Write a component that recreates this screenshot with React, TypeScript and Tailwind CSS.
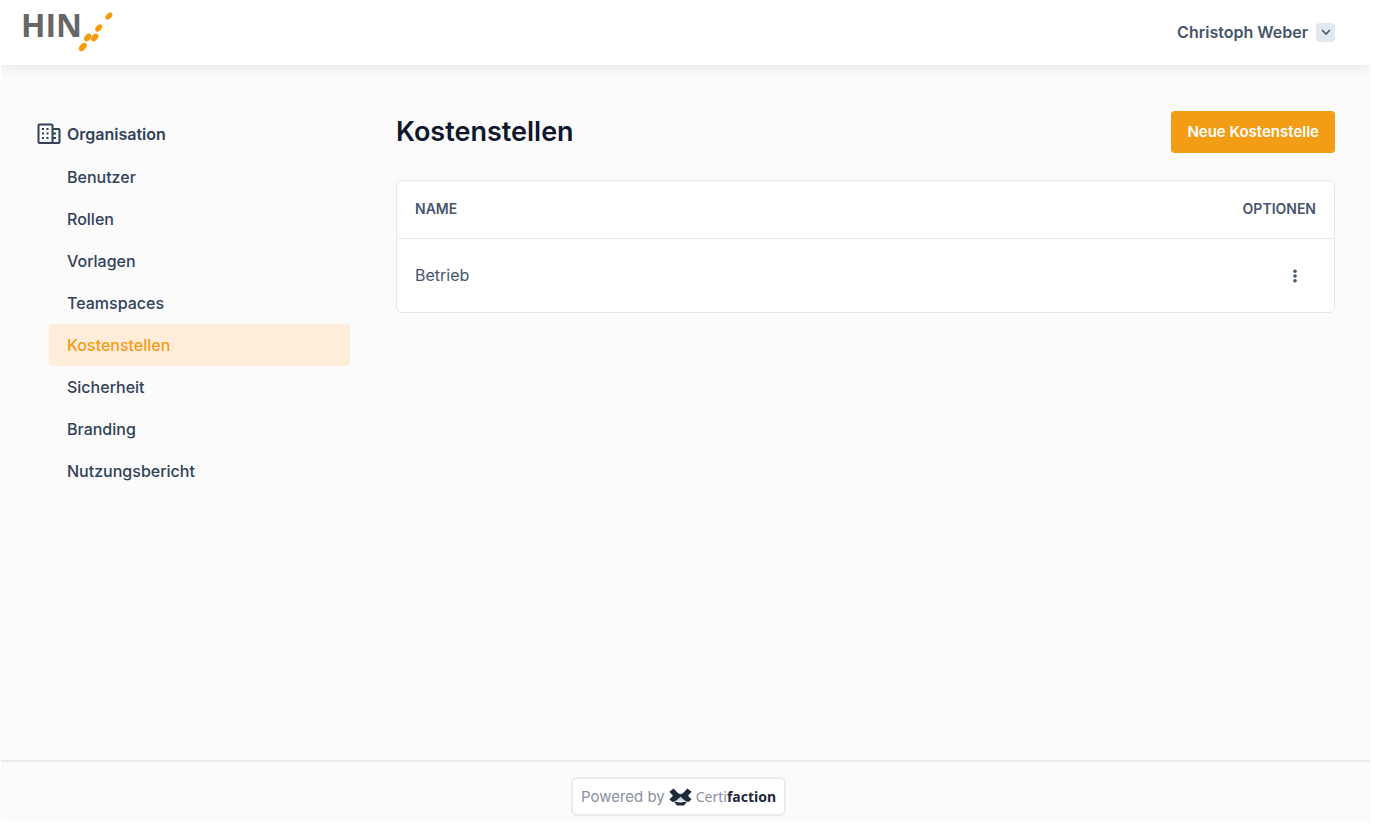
import React from 'react';

const navItems = [
    'Benutzer',
    'Rollen',
    'Vorlagen',
    'Teamspaces',
    'Kostenstellen',
    'Sicherheit',
    'Branding',
    'Nutzungsbericht',
];

const costCenters = [{ id: 1, name: 'Betrieb' }];

const HinLogo = () => (
    <a href="#" aria-label="HIN" className="flex text-[#666666]">
        <svg width="94" height="43" viewBox="0 0 94 43" overflow="visible" aria-hidden="true">
            <text x="-1" y="26" fill="currentColor" fontSize="32" fontWeight="700" fontFamily="'Open Sans', sans-serif">
                HIN
            </text>
            <g fill="#f59b0b">
                <ellipse cx="87" cy="5" rx="4.2" ry="2.6" transform="rotate(-48 87 5)" />
                <ellipse cx="76.7" cy="17" rx="4.2" ry="2.8" transform="rotate(-50 76.7 17)" />
                <ellipse cx="65.7" cy="26.5" rx="4.4" ry="3" transform="rotate(-52 65.7 26.5)" />
                <ellipse cx="72.7" cy="26.5" rx="4.4" ry="3" transform="rotate(-52 72.7 26.5)" />
                <ellipse cx="60.8" cy="36" rx="4.8" ry="3" transform="rotate(-50 60.8 36)" />
            </g>
        </svg>
    </a>
);

const Header = () => (
    <header className="flex h-[65px] items-center justify-between bg-white pl-[21px] pr-[35px] shadow-[0_2px_12px_rgba(30,41,59,0.1)]">
        <HinLogo />
        <button type="button" className="flex items-center gap-2 pb-px text-base font-semibold text-slate-600">
            Christoph Weber
            <span className="flex size-[19px] items-center justify-center rounded bg-slate-200">
                <svg width="10" height="6" viewBox="0 0 10 6" fill="none" stroke="currentColor" strokeWidth="1.6">
                    <path d="M1 1l4 4 4-4" />
                </svg>
            </span>
        </button>
    </header>
);

const Sidebar = () => (
    <nav aria-label="Organisation" className="w-[313px] shrink-0">
        <h2 className="flex h-[45px] items-center gap-1.5 text-base font-semibold text-slate-700">
            <svg width="24" height="22" viewBox="0 0 24 22" fill="none" stroke="currentColor" strokeWidth="2" aria-hidden="true">
                <rect x="1.5" y="1.5" width="14" height="18.5" rx="1" />
                <path d="M15.5 6h6a1 1 0 0 1 1 1v12a1 1 0 0 1-1 1h-6" />
                <path d="M5 6h2M9.5 6h2M5 10.5h2M9.5 10.5h2M5 15h2M9.5 15h2M16 10.5h3M16 15h3" />
            </svg>
            Organisation
        </h2>
        <ul className="pl-3">
            {navItems.map((item) => (
                <li key={item}>
                    <a
                        href="#"
                        className={
                            item === 'Kostenstellen'
                                ? 'flex h-[42px] items-center rounded bg-[#ffedda] px-[18px] font-medium text-[#f39c16]'
                                : 'flex h-[42px] items-center rounded px-[18px] font-medium text-slate-700'
                        }
                    >
                        {item}
                    </a>
                </li>
            ))}
        </ul>
    </nav>
);

const CostCenterTable = () => (
    <div className="mt-[27px] overflow-hidden rounded-md border border-slate-200 bg-white">
        <table className="w-full">
            <thead>
                <tr className="h-[57px] border-b border-slate-200 text-sm uppercase text-slate-600">
                    <th scope="col" className="px-[18px] text-left font-semibold">Name</th>
                    <th scope="col" className="px-[18px] text-right font-semibold">Optionen</th>
                </tr>
            </thead>
            <tbody>
                {costCenters.map((center) => (
                    <tr key={center.id} className="h-[74px] text-slate-600">
                        <td className="px-[18px]">{center.name}</td>
                        <td className="px-[18px]">
                            <button type="button" aria-label="Optionen" className="ml-auto flex size-[42px] items-center justify-center pt-0.5">
                                <svg width="4" height="14" viewBox="0 0 4 14" fill="currentColor">
                                    <circle cx="2" cy="2.2" r="1.8" />
                                    <circle cx="2" cy="7" r="1.8" />
                                    <circle cx="2" cy="11.8" r="1.8" />
                                </svg>
                            </button>
                        </td>
                    </tr>
                ))}
            </tbody>
        </table>
    </div>
);

const Footer = () => (
    <footer className="flex h-[62px] justify-center border-t-2 border-[#e9ebf0] pr-3.5 pt-[15px]">
        <a href="#" className="flex h-[39px] items-center rounded-md border-2 border-[#e9ebf0] bg-white px-2 text-[#8a8f9f]">
            <span className="pt-px text-[15px]">Powered by</span>
            <svg className="mx-1" width="23" height="18" viewBox="0 0 23 18" fill="#1e293b" aria-hidden="true">
                <path d="M7 12.8L11.5 8.5L16 12.8Z" fill="#cfd3da" />
                <path d="M0.4 3.8L4.6 0.4L8.6 4.8Q11.5 7.6 14.4 4.8L18.4 0.4L22.6 3.8L19 7.8L22.6 11.4L19.4 14L16 12.8L11.5 8.8L7 12.8L3.6 14L0.4 11.4L4 7.8Z" />
                <path d="M4.8 13.6Q11.5 15.2 18.2 13.6L15 17.6H8Z" />
            </svg>
            <span className="font-['Noto_Sans',sans-serif] text-sm">
                Certi<b className="font-bold text-slate-800">faction</b>
            </span>
        </a>
    </footer>
);

export default function App() {
    return (
        <div className="min-h-screen overflow-x-hidden bg-white pb-[3px] pl-px pr-[5px] font-['Inter',sans-serif] text-base">
            <div className="flex min-h-[calc(100vh-3px)] flex-col overflow-hidden bg-[#fbfbfb]">
                <Header />
                <div className="flex grow gap-[46px] pl-9 pr-[35px] pt-[46px]">
                    <Sidebar />
                    <main className="grow">
                        <div className="flex items-center justify-between">
                            <h1 className="text-[27px] font-semibold text-slate-900">Kostenstellen</h1>
                            <button type="button" className="h-[42px] rounded bg-[#f39c16] px-4 text-[15px] font-semibold text-white">
                                Neue Kostenstelle
                            </button>
                        </div>
                        <CostCenterTable />
                    </main>
                </div>
                <Footer />
            </div>
        </div>
    );
}
